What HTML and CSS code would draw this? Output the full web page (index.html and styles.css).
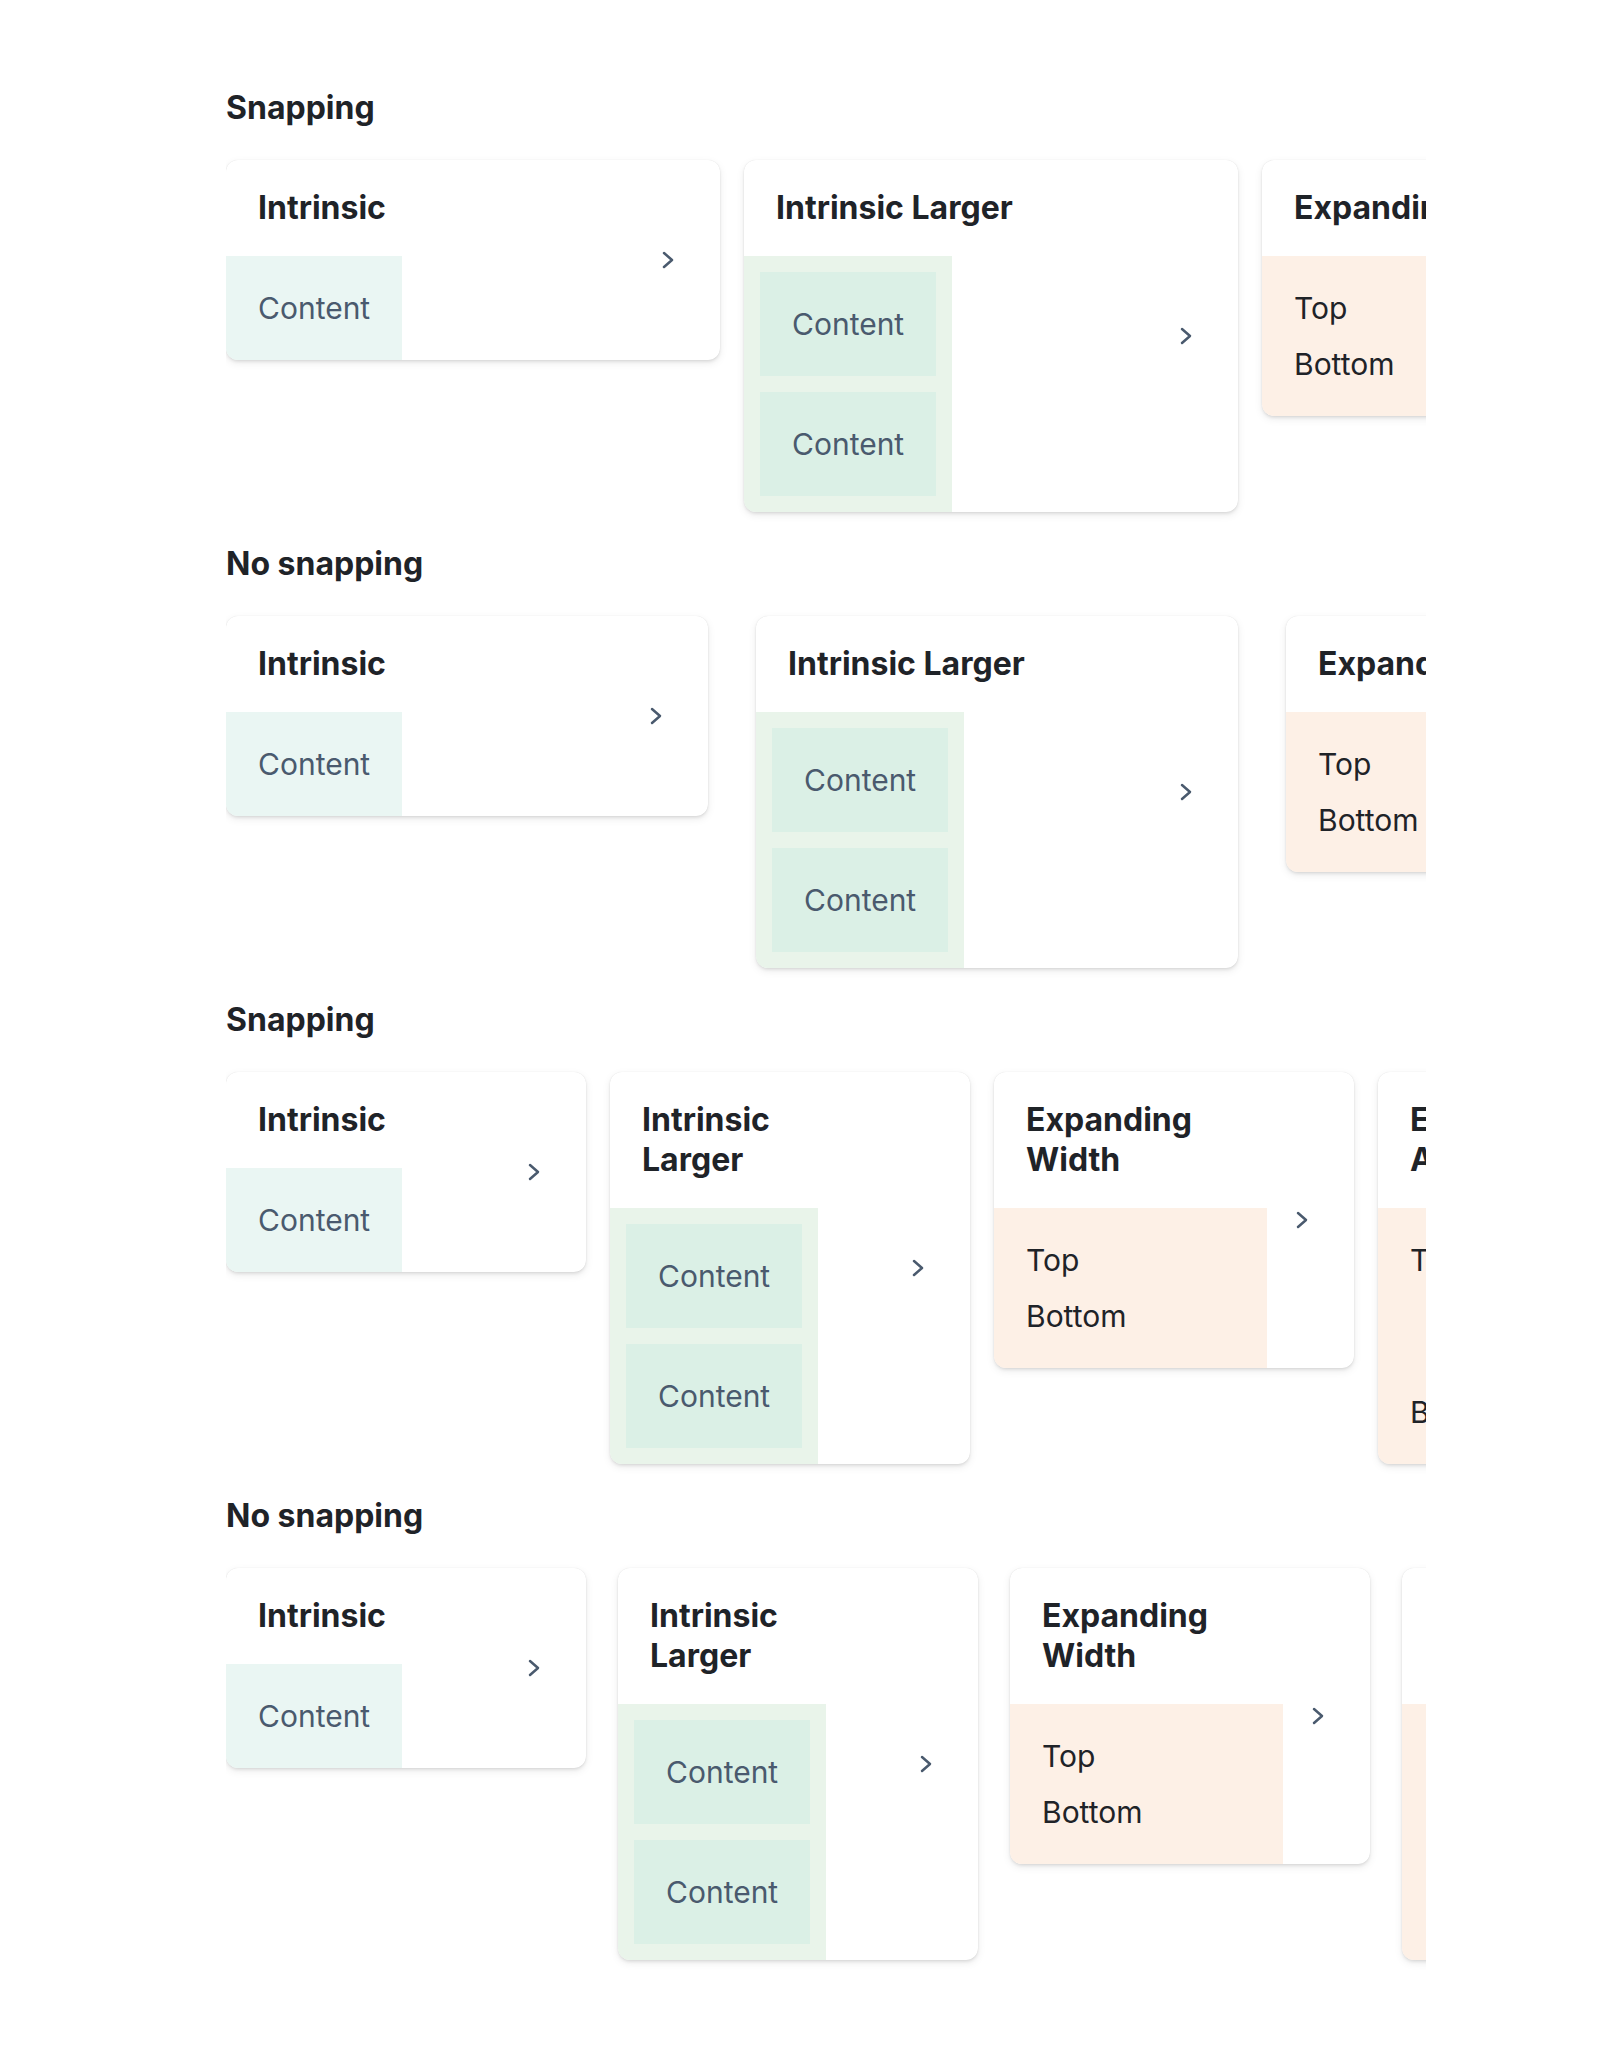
FILE: index.html
```html
<!DOCTYPE html>
<html lang="en">
<head>
  <meta charset="UTF-8" />
  <meta name="viewport" content="width=device-width, initial-scale=1" />
  <title>Scroll snapping</title>
  <link rel="stylesheet" href="styles.css">
</head>
<body>
  <main class="page">

    <!-- wide cards, snapping -->
    <section class="demo">
      <h2 class="demo-title">Snapping</h2>
      <div class="strip strip-wide">
        <div class="card">
          <h3 class="card-title">Intrinsic</h3>
          <div class="body-intrinsic">Content</div>
          <svg class="chevron" width="12" height="18" viewBox="0 0 12 18"><path d="M2 2 L10 9 L2 16" /></svg>
        </div>
        <div class="card">
          <h3 class="card-title">Intrinsic Larger</h3>
          <div class="body-larger">
            <div class="cell">Content</div>
            <div class="cell">Content</div>
          </div>
          <svg class="chevron" width="12" height="18" viewBox="0 0 12 18"><path d="M2 2 L10 9 L2 16" /></svg>
        </div>
        <div class="card">
          <h3 class="card-title">Expanding Width</h3>
          <div class="body-expand">
            <div>Top</div>
            <div>Bottom</div>
          </div>
          <svg class="chevron" width="12" height="18" viewBox="0 0 12 18"><path d="M2 2 L10 9 L2 16" /></svg>
        </div>
        <div class="card card-grow">
          <h3 class="card-title">Expanding All</h3>
          <div class="body-expand">
            <div>Top</div>
            <div>Bottom</div>
          </div>
          <svg class="chevron" width="12" height="18" viewBox="0 0 12 18"><path d="M2 2 L10 9 L2 16" /></svg>
        </div>
      </div>
    </section>

    <!-- wide cards, free scrolling -->
    <section class="demo">
      <h2 class="demo-title">No snapping</h2>
      <div class="strip strip-wide-loose">
        <div class="card">
          <h3 class="card-title">Intrinsic</h3>
          <div class="body-intrinsic">Content</div>
          <svg class="chevron" width="12" height="18" viewBox="0 0 12 18"><path d="M2 2 L10 9 L2 16" /></svg>
        </div>
        <div class="card">
          <h3 class="card-title">Intrinsic Larger</h3>
          <div class="body-larger">
            <div class="cell">Content</div>
            <div class="cell">Content</div>
          </div>
          <svg class="chevron" width="12" height="18" viewBox="0 0 12 18"><path d="M2 2 L10 9 L2 16" /></svg>
        </div>
        <div class="card">
          <h3 class="card-title">Expanding Width</h3>
          <div class="body-expand">
            <div>Top</div>
            <div>Bottom</div>
          </div>
          <svg class="chevron" width="12" height="18" viewBox="0 0 12 18"><path d="M2 2 L10 9 L2 16" /></svg>
        </div>
        <div class="card card-grow">
          <h3 class="card-title">Expanding All</h3>
          <div class="body-expand">
            <div>Top</div>
            <div>Bottom</div>
          </div>
          <svg class="chevron" width="12" height="18" viewBox="0 0 12 18"><path d="M2 2 L10 9 L2 16" /></svg>
        </div>
      </div>
    </section>

    <!-- narrow cards, snapping -->
    <section class="demo">
      <h2 class="demo-title">Snapping</h2>
      <div class="strip strip-narrow">
        <div class="card">
          <h3 class="card-title">Intrinsic</h3>
          <div class="body-intrinsic">Content</div>
          <svg class="chevron" width="12" height="18" viewBox="0 0 12 18"><path d="M2 2 L10 9 L2 16" /></svg>
        </div>
        <div class="card">
          <h3 class="card-title">Intrinsic Larger</h3>
          <div class="body-larger">
            <div class="cell">Content</div>
            <div class="cell">Content</div>
          </div>
          <svg class="chevron" width="12" height="18" viewBox="0 0 12 18"><path d="M2 2 L10 9 L2 16" /></svg>
        </div>
        <div class="card">
          <h3 class="card-title">Expanding Width</h3>
          <div class="body-expand">
            <div>Top</div>
            <div>Bottom</div>
          </div>
          <svg class="chevron" width="12" height="18" viewBox="0 0 12 18"><path d="M2 2 L10 9 L2 16" /></svg>
        </div>
        <div class="card card-grow">
          <h3 class="card-title">Expanding All</h3>
          <div class="body-expand">
            <div>Top</div>
            <div>Bottom</div>
          </div>
          <svg class="chevron" width="12" height="18" viewBox="0 0 12 18"><path d="M2 2 L10 9 L2 16" /></svg>
        </div>
      </div>
    </section>

    <!-- narrow cards, free scrolling -->
    <section class="demo">
      <h2 class="demo-title">No snapping</h2>
      <div class="strip strip-narrow-loose">
        <div class="card">
          <h3 class="card-title">Intrinsic</h3>
          <div class="body-intrinsic">Content</div>
          <svg class="chevron" width="12" height="18" viewBox="0 0 12 18"><path d="M2 2 L10 9 L2 16" /></svg>
        </div>
        <div class="card">
          <h3 class="card-title">Intrinsic Larger</h3>
          <div class="body-larger">
            <div class="cell">Content</div>
            <div class="cell">Content</div>
          </div>
          <svg class="chevron" width="12" height="18" viewBox="0 0 12 18"><path d="M2 2 L10 9 L2 16" /></svg>
        </div>
        <div class="card">
          <h3 class="card-title">Expanding Width</h3>
          <div class="body-expand">
            <div>Top</div>
            <div>Bottom</div>
          </div>
          <svg class="chevron" width="12" height="18" viewBox="0 0 12 18"><path d="M2 2 L10 9 L2 16" /></svg>
        </div>
        <div class="card card-grow">
          <h3 class="card-title">Expanding All</h3>
          <div class="body-expand">
            <div>Top</div>
            <div>Bottom</div>
          </div>
          <svg class="chevron" width="12" height="18" viewBox="0 0 12 18"><path d="M2 2 L10 9 L2 16" /></svg>
        </div>
      </div>
    </section>

  </main>
</body>
</html>
```

FILE: styles.css
```css
html, body {
  margin: 0;
  padding: 0;
  background: #fff;
  font-family: 'Inter', 'Noto Sans', sans-serif;
  color: #1f2328;
}

.page {
  width: 1200px;
  margin-left: 226px;
  padding: 56px 0 88px;
}

/* Section heading */
.demo-title {
  margin: 32px 0 32px;
  font-size: 32px;
  line-height: 40px;
  font-weight: 700;
  color: #1f2328;
}

.strip {
  display: flex;
  align-items: flex-start;
  overflow-x: clip;
  padding-bottom: 8px;
  margin-bottom: -8px;
}

.strip-wide { gap: 24px; }
.strip-wide .card { width: 494px; }

.strip-wide-loose { gap: 48px; }
.strip-wide-loose .card { width: 482px; }

.strip-narrow { gap: 24px; }
.strip-narrow .card { width: 360px; }

.strip-narrow-loose { gap: 32px; }
.strip-narrow-loose .card { width: 360px; }

/* Card */
.card {
  flex: none;
  display: grid;
  grid-template-columns: minmax(0, 1fr) auto;
  grid-template-rows: auto 1fr;
  background: #fff;
  border-radius: 12px;
  overflow: hidden;
  box-shadow: 0 0 1px rgba(0,0,0,0.12), 0 2px 3px rgba(0,0,0,0.08), 0 3px 8px rgba(0,0,0,0.08);
}

.card-grow {
  align-self: stretch;
}

.card-title {
  grid-column: 1;
  grid-row: 1;
  margin: 0;
  padding: 28px 32px;
  font-size: 32px;
  line-height: 40px;
  font-weight: 700;
  color: #1f2328;
}

.chevron {
  grid-column: 2;
  grid-row: 1 / 3;
  align-self: center;
  margin: 0 46px 0 29px;
  fill: none;
  stroke: #4a5a6e;
  stroke-width: 2.5;
  stroke-linecap: round;
  stroke-linejoin: round;
}

/* Card bodies */
.body-intrinsic {
  grid-column: 1;
  grid-row: 2;
  justify-self: start;
  align-self: start;
  padding: 32px;
  background: #eaf6f3;
  color: #4a5a6e;
  font-size: 30px;
  line-height: 40px;
}

.body-larger {
  grid-column: 1;
  grid-row: 2;
  justify-self: start;
  align-self: start;
  display: flex;
  flex-direction: column;
  gap: 16px;
  padding: 16px;
  background: #e9f4ea;
}

.body-larger .cell {
  padding: 32px;
  background: #dbf0e6;
  color: #4a5a6e;
  font-size: 30px;
  line-height: 40px;
}

.body-expand {
  grid-column: 1;
  grid-row: 2;
  display: flex;
  flex-direction: column;
  justify-content: space-between;
  gap: 16px;
  padding: 32px;
  background: #fdf0e6;
  color: #1f2328;
  font-size: 30px;
  line-height: 40px;
}
```
